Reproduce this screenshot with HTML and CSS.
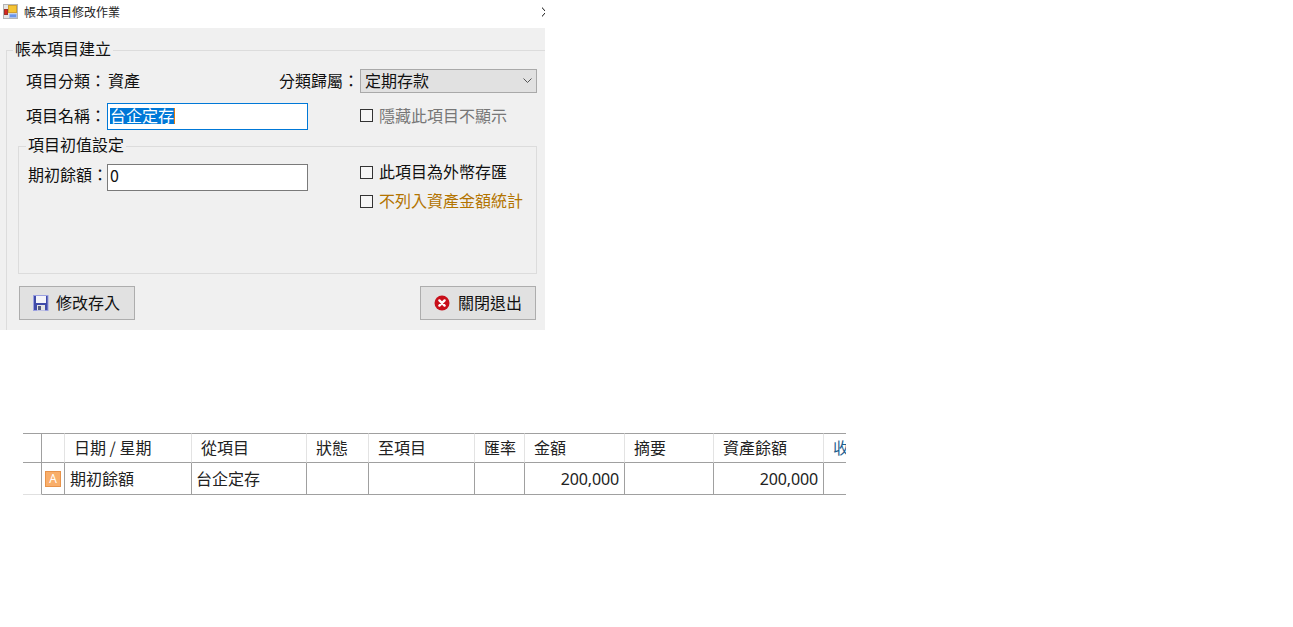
FILE: index.html
```html
<!DOCTYPE html>
<html lang="zh-Hant">
<head>
<meta charset="utf-8">
<title>帳本項目修改作業</title>
<link rel="stylesheet" href="styles.css">
</head>
<body>
<section class="window">
  <header class="titlebar">
    <svg class="app-icon" width="15" height="15" viewBox="0 0 15 15">
      <rect x="0.5" y="0.5" width="14" height="14" fill="#e4e4e4" stroke="#b4b4b4"/>
      <rect x="5.5" y="1.5" width="8" height="7" fill="#f5c433" stroke="#d0a030"/>
      <rect x="1.5" y="5.5" width="3" height="5" fill="#d8261c" stroke="#a03028"/>
      <rect x="6.5" y="10" width="7" height="3.5" fill="#6a94ea" stroke="#a8c0ea"/>
    </svg>
    <span class="title-text">帳本項目修改作業</span>
    <svg class="close-icon" width="3" height="12" viewBox="0 0 3 12">
      <path d="M-1 0.5 L4 6 L-1 11.5" fill="none" stroke="#111" stroke-width="1"/>
    </svg>
  </header>
  <div class="client">
    <fieldset class="group-outer">
      <legend class="legend-outer">帳本項目建立</legend>
      <div class="row row-first">
        <span class="label">項目分類：</span>
        <span class="value">資產</span>
        <span class="label label-right">分類歸屬：</span>
        <div class="combo">
          <span class="combo-text">定期存款</span>
          <svg width="9" height="6" viewBox="0 0 9 6"><path d="M0.5 0.5 L4.5 4.5 L8.5 0.5" fill="none" stroke="#555" stroke-width="1"/></svg>
        </div>
      </div>
      <div class="row row-second">
        <span class="label label-name">項目名稱：</span>
        <div class="textbox textbox-focus"><span class="selection">台企定存</span></div>
        <label class="check check-muted"><span class="box"></span><span class="check-text">隱藏此項目不顯示</span></label>
      </div>
      <fieldset class="group-inner">
        <legend class="legend-inner">項目初值設定</legend>
        <div class="inner-grid">
          <span class="label">期初餘額：</span>
          <div class="textbox">0</div>
          <div class="check-stack">
            <label class="check"><span class="box"></span><span class="check-text">此項目為外幣存匯</span></label>
            <label class="check check-amber"><span class="box"></span><span class="check-text">不列入資產金額統計</span></label>
          </div>
        </div>
      </fieldset>
      <div class="actions">
        <button class="btn btn-save" type="button">
          <svg width="16" height="16" viewBox="0 0 16 16">
            <rect x="0.5" y="0.5" width="14.5" height="15" fill="#3f4aa8" stroke="#9a9fe0"/>
            <rect x="3" y="1" width="10" height="7" fill="#f4f4fa"/>
            <rect x="4" y="10" width="8" height="5.5" fill="#e4e4e4"/>
            <rect x="5" y="11" width="3" height="4" fill="#555a80"/>
          </svg>
          <span class="btn-text">修改存入</span>
        </button>
        <button class="btn btn-close" type="button">
          <svg width="16" height="16" viewBox="0 0 16 16">
            <circle cx="8" cy="8" r="7.5" fill="#c80f1a"/>
            <path d="M5.4 5.4 L10.6 10.6 M10.6 5.4 L5.4 10.6" stroke="#fff" stroke-width="2.4" stroke-linecap="round"/>
          </svg>
          <span class="btn-text">關閉退出</span>
        </button>
      </div>
    </fieldset>
  </div>
</section>

<div class="grid-wrap">
  <table class="grid">
    <colgroup>
      <col class="c1"><col class="c2"><col class="c3"><col class="c4"><col class="c5"><col class="c6"><col class="c7"><col class="c8"><col class="c9"><col class="c10"><col class="c11">
    </colgroup>
    <thead>
      <tr>
        <th class="dark"></th><th></th><th>日期 / 星期</th><th>從項目</th><th>狀態</th><th>至項目</th><th>匯率</th><th>金額</th><th>摘要</th><th>資產餘額</th><th class="blue">收</th>
      </tr>
    </thead>
    <tbody>
      <tr>
        <td class="stub"></td>
        <td class="flag-cell"><span class="flag">A</span></td>
        <td class="text">期初餘額</td>
        <td class="text text-tight">台企定存</td>
        <td></td><td></td><td></td>
        <td class="num">200,000</td>
        <td></td>
        <td class="num">200,000</td>
        <td></td>
      </tr>
    </tbody>
  </table>
</div>
</body>
</html>
```

FILE: styles.css
```css
* { box-sizing: border-box; }
html, body { margin: 0; padding: 0; background: #fff; }
body {
  font-family: "Noto Sans CJK TC", "Noto Sans", sans-serif;
  font-size: 16px;
  color: #111;
}
.window { width: 545px; height: 330px; overflow: hidden; }
.titlebar { height: 28px; display: flex; align-items: center; padding-left: 3px; background: #fff; padding-bottom: 5px; }
.app-icon { flex: none; }
.title-text { font-size: 12px; margin-left: 6px; color: #222; }
.close-icon { margin-left: auto; flex: none; }
.client { height: 302px; background: #f0f0f0; padding: 11px 0 0 6px; }

fieldset { margin: 0; padding: 0; min-width: 0; }
.group-outer { width: 600px; height: 330px; border: 1px solid #dcdcdc; }
.legend-outer { margin-left: 6px; padding: 0 2px 4px; line-height: 18px; color: #111; }
.row { display: flex; align-items: center; padding-left: 19px; width: 530px; }
.row-first { margin-top: 8px; height: 24px; }
.row-second { margin-top: 10px; height: 27px; }
.label { flex: none; width: 81px; line-height: 20px; padding-bottom: 2px; white-space: nowrap; }
.label-name { padding-bottom: 4px; }
.value { margin-left: 1px; padding-bottom: 2px; line-height: 20px; }
.label-right { margin-left: auto; width: 81px; }
.combo {
  width: 177px; height: 24px; flex: none;
  display: flex; align-items: center; justify-content: space-between;
  padding: 0 4px;
  background: #e1e1e1; border: 1px solid #a9a9a9;
}
.combo-text { line-height: 20px; padding-bottom: 2px; }
.textbox {
  flex: none; width: 201px; height: 27px;
  display: flex; align-items: center; padding: 0 0 6px 2px;
  background: #fff; border: 1px solid #7a7a7a;
  line-height: 18px;
}
.textbox-focus { border-color: #0078d7; padding-bottom: 2px; }
.selection {
  display: block; height: 16px; line-height: 14px;
  background: #0078d7; color: #fff; border-right: 1px solid #e07b10;
}
.check { display: flex; align-items: center; height: 16px; flex: none; }
.check-text { line-height: 16px; padding-bottom: 2px; }
.row-second .check { margin: 0 0 2px 52px; }
.check-muted { color: #777; }
.check-amber { color: #b37400; }
.box { width: 13px; height: 13px; margin-right: 6px; border: 1px solid #333; background: #f6f6f6; flex: none; }
.group-inner { width: 519px; height: 139px; margin: 5px 0 0 11px; border: 1px solid #dcdcdc; }
.legend-inner { margin-left: 7px; padding: 0 2px 4px; line-height: 18px; }
.inner-grid {
  display: grid;
  grid-template-columns: 79px 201px auto;
  column-gap: 0;
  align-items: start;
  padding: 7px 0 0 9px;
}
.inner-grid .label { width: 79px; padding: 0; line-height: 20px; }
.check-stack { display: flex; flex-direction: column; gap: 13px; margin-left: 52px; }
.actions { display: flex; justify-content: space-between; width: 517px; margin: 12px 0 0 12px; }
.btn {
  width: 116px; height: 34px;
  display: flex; align-items: center;
  background: #e1e1e1; border: 1px solid #adadad;
  font: inherit; color: #111;
  padding: 0 0 0 13px;
  cursor: default;
}
.btn-text { line-height: 20px; padding-bottom: 2px; }
.btn-save svg { margin-right: 7px; }
.btn-close svg { margin-right: 8px; }

.grid-wrap { width: 823px; margin: 103px 0 0 23px; overflow: hidden; }
.grid { border-collapse: separate; border-spacing: 0; table-layout: fixed; width: 841px; }
.c1 { width: 19px; } .c2 { width: 23px; } .c3 { width: 127px; } .c4 { width: 115px; }
.c5 { width: 62px; } .c6 { width: 106px; } .c7 { width: 50px; } .c8 { width: 100px; }
.c9 { width: 89px; } .c10 { width: 110px; } .c11 { width: 40px; }
.grid th {
  height: 30px; padding: 0 0 2px 9px;
  font-weight: normal; text-align: left; white-space: nowrap; overflow: hidden;
  color: #222;
  background: #fff;
  border-top: 1px solid #a0a0a0;
  border-bottom: 1px solid #a0a0a0;
  border-right: 1px solid #e3e3e3;
}
.grid th.dark { border-right-color: #a0a0a0; }
.grid th.blue { color: #1f5f8f; }
.grid td {
  height: 32px; padding: 0;
  border-bottom: 1px solid #a0a0a0;
  border-right: 1px solid #a0a0a0;
  white-space: nowrap;
  color: #222;
}
.grid td.stub { border-bottom-color: #e0e0e0; }
.flag-cell { padding-left: 3px !important; }
.flag {
  display: block; width: 16px; height: 16px;
  font-family: "Noto Sans", sans-serif; font-size: 12px; line-height: 14px; text-align: center;
  color: #fff; background: #f9ae6a; border: 1px solid #e8934a;
}
.grid td.text { padding: 0 0 2px 5px; }
.grid td.text-tight { padding-left: 4px; }
.grid td.num { padding-right: 5px; text-align: right; font-family: "Noto Sans", sans-serif; letter-spacing: -0.15px; }
```
